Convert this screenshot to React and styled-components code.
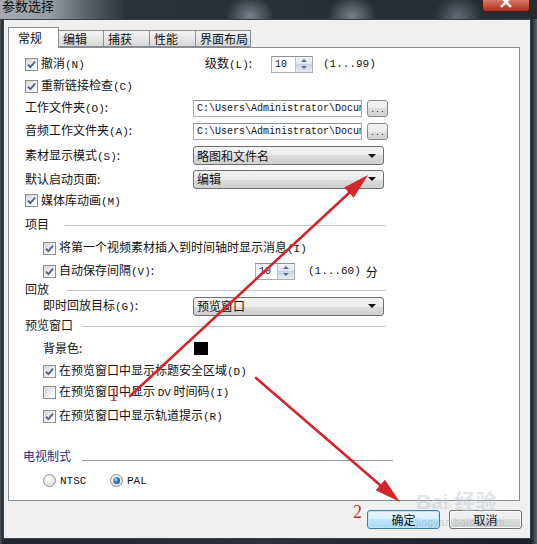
import styled, { createGlobalStyle } from 'styled-components';

const Global = createGlobalStyle`
  html, body { margin: 0; padding: 0; background: #1f2429; overflow: hidden; }
  body {
    font-family: "Noto Sans CJK SC", "Noto Sans", sans-serif;
    font-size: 12px;
    color: #111;
  }
`;

const Frame = styled.div`
  position: relative;
  width: 537px;
  height: 544px;
  display: flex;
  flex-direction: column;
  overflow: hidden;
  background: linear-gradient(90deg, #4a5158 0, #22272d 3px, #2a3036 50%, #1b1f25 calc(100% - 6px), #5d646c 100%);
`;

const TitleBar = styled.div`
  height: 19px;
  flex: 0 0 19px;
  display: flex;
  justify-content: space-between;
  align-items: flex-start;
  background:
    radial-gradient(ellipse 24px 20px at 250px 16px, rgba(185,195,205,.55), transparent),
    radial-gradient(ellipse 24px 20px at 352px 16px, rgba(185,195,205,.55), transparent),
    radial-gradient(ellipse 24px 20px at 458px 16px, rgba(170,180,190,.45), transparent),
    linear-gradient(90deg, #a5aaaf 0, #979da3 50px, #5e646b 85px, #2d3238 125px, #272c32 100%);
`;

const Title = styled.div`
  font-size: 13px;
  line-height: 13px;
  padding-left: 2px;
  margin-top: -1px;
  color: #0d0d0d;
`;

const Close = styled.div`
  width: 46px;
  height: 11px;
  margin-right: 7px;
  border: 1px solid #5a1a14;
  border-top: none;
  border-radius: 0 0 4px 4px;
  background: linear-gradient(#d87a6a, #c24a36 60%, #a8301f);
  display: flex;
  justify-content: center;
  overflow: hidden;
  svg { margin-top: -4px; }
`;

const Client = styled.div`
  flex: 1;
  margin: 0 6px 5px 3px;
  border: 1px solid #3b4148;
  background: #f0f0f0;
  padding: 7px 10px 0 4px;
  display: flex;
  flex-direction: column;
`;

const TabStrip = styled.div`
  display: flex;
  align-items: flex-end;
  height: 21px;
  position: relative;
  z-index: 1;
`;

const Tab = styled.div`
  box-sizing: border-box;
  width: ${p => p.w}px;
  height: ${p => (p.active ? 21 : 17)}px;
  margin-bottom: ${p => (p.active ? 0 : 1)}px;
  margin-left: ${p => (p.first ? 0 : -1)}px;
  padding-left: ${p => (p.active ? 9 : 4)}px;
  border: 1px solid #898c95;
  border-bottom: ${p => (p.active ? 'none' : '1px solid #898c95')};
  background: ${p => (p.active ? '#fff' : 'linear-gradient(#f4f4f4, #e6e6e6 50%, #d8d8d8)')};
  line-height: ${p => (p.active ? 19 : 15)}px;
  font-size: 12px;
`;

const Panel = styled.div`
  box-sizing: border-box;
  margin-top: -1px;
  width: 512px;
  height: 454px;
  border: 1px solid #898c95;
  background: #fff;
  padding-top: 5px;
  display: flex;
  flex-direction: column;
`;

const Row = styled.div`
  height: ${p => p.h}px;
  flex: 0 0 ${p => p.h}px;
  margin-top: ${p => p.mt || 0}px;
  padding-left: ${p => p.indent}px;
  display: flex;
  align-items: center;
  white-space: nowrap;
`;

const Label = styled.span`
  width: ${p => p.w}px;
  flex: 0 0 ${p => p.w}px;
  line-height: 14px;
`;

const Mn = styled.span`
  font-family: "Liberation Mono", monospace;
  font-size: 11px;
`;

const CheckWrap = styled.span`
  display: flex;
  align-items: center;
  width: ${p => (p.w ? `${p.w}px` : 'auto')};
  flex: 0 0 auto;
  line-height: 14px;
  white-space: pre;
`;

const Box = styled.span`
  box-sizing: border-box;
  width: 13px;
  height: 13px;
  margin-right: 3px;
  border: 1px solid #8e8f8f;
  background: linear-gradient(135deg, #d6d6d6, #f6f6f6 70%, #fff);
  display: flex;
  align-items: center;
  justify-content: center;
`;

const Check = ({ on, w, children }) => (
  <CheckWrap w={w}>
    <Box>
      {on && (
        <svg width="11" height="11" viewBox="0 0 11 11">
          <path d="M2 5.6 L4.4 8.2 L9 2.6" fill="none" stroke="#4b5f86" strokeWidth="1.8" />
        </svg>
      )}
    </Box>
    <span>{children}</span>
  </CheckWrap>
);

const RadioDot = styled.span`
  box-sizing: border-box;
  width: 13px;
  height: 13px;
  border-radius: 50%;
  margin-right: 4px;
  border: 1px solid #8e8f8f;
  background: radial-gradient(circle at 40% 35%, #fff, #d4d4d4);
  display: flex;
  align-items: center;
  justify-content: center;
  &::after {
    content: '';
    display: ${p => (p.on ? 'block' : 'none')};
    width: 7px;
    height: 7px;
    border-radius: 50%;
    background: radial-gradient(circle at 35% 35%, #9fd0f5, #2a6bb0 55%, #0e3a6e);
  }
`;

const Radio = ({ on, w, children }) => (
  <CheckWrap w={w}>
    <RadioDot on={on} />
    <span>{children}</span>
  </CheckWrap>
);

const Field = styled.span`
  box-sizing: border-box;
  width: ${p => p.w}px;
  height: 17px;
  border: 1px solid #abadb3;
  border-top-color: #8d9097;
  background: #fff;
  display: flex;
  align-items: center;
  overflow: hidden;
  font-family: "Liberation Mono", monospace;
  font-size: 10px;
  padding-left: 3px;
`;

const SpinBtns = styled.span`
  margin-left: auto;
  width: 16px;
  height: 15px;
  border-left: 1px solid #b4c0d3;
  background: linear-gradient(#f4f7fb, #dfe6f0 48%, #c9d4e3 50%, #e6ecf4);
  display: flex;
  flex-direction: column;
  align-items: center;
  justify-content: space-around;
  &::before, &::after {
    content: '';
    border-left: 3px solid transparent;
    border-right: 3px solid transparent;
  }
  &::before { border-bottom: 3px solid #5a6b8c; }
  &::after { border-top: 3px solid #5a6b8c; }
`;

const Spin = ({ w, value }) => (
  <Field w={w}>
    <span>{value}</span>
    <SpinBtns />
  </Field>
);

const Hint = styled.span`
  margin-left: ${p => p.ml}px;
  font-family: "Liberation Mono", "Noto Sans CJK SC", monospace;
  font-size: 11px;
`;

const HintCjk = styled.span`
  font-family: "Noto Sans CJK SC", sans-serif;
  font-size: 12px;
  margin-left: 5px;
`;

const Dots = styled.span`
  box-sizing: border-box;
  width: 21px;
  height: 17px;
  margin-left: 5px;
  border: 1px solid #8a8a8a;
  border-radius: 3px;
  background: linear-gradient(#f4f4f4, #ececec 50%, #dedede 50%, #d2d2d2);
  display: flex;
  justify-content: center;
  align-items: center;
  font-family: "Liberation Mono", monospace;
  font-size: 8px;
  line-height: 9px;
  padding-top: 2px;
  overflow: hidden;
`;

const Select = styled.span`
  box-sizing: border-box;
  width: 191px;
  height: 19px;
  border: 1px solid #707070;
  border-radius: 3px;
  background: linear-gradient(#f3f3f3, #ebebeb 50%, #dddddd 50%, #cfcfcf);
  display: flex;
  align-items: center;
  padding: 0 7px 0 3px;
  line-height: 14px;
  &::after {
    content: '';
    margin-left: auto;
    border-left: 4px solid transparent;
    border-right: 4px solid transparent;
    border-top: 4px solid #111;
  }
`;

const Swatch = styled.span`
  width: 14px;
  height: 13px;
  background: #000;
`;

const Section = styled.div`
  height: ${p => p.h}px;
  flex: 0 0 ${p => p.h}px;
  margin-top: ${p => p.mt || 0}px;
  padding-left: ${p => p.indent}px;
  width: ${p => p.end - p.indent}px;
  display: flex;
  align-items: center;
  color: ${p => (p.tv ? '#1b2f82' : '#1a1a1a')};
  line-height: 14px;
  &::after {
    content: '';
    flex: 1;
    margin-left: ${p => p.gap}px;
    margin-top: ${p => (p.tv ? 8 : 2)}px;
    height: 1px;
    background: ${p => (p.tv ? '#9a9a9a' : '#c4c4c4')};
  }
`;

const ButtonBar = styled.div`
  display: flex;
  justify-content: flex-end;
  gap: 9px;
  margin: 9px -2px 0 0;
`;

const Button = styled.div`
  box-sizing: border-box;
  width: 73px;
  height: 19px;
  border-radius: 3px;
  border: 1px solid ${p => (p.primary ? '#3c7fb1' : '#707070')};
  background: ${p => (p.primary
    ? 'linear-gradient(#eaf6fd, #d9f0fc 50%, #bee6fd 50%, #a7d9f5)'
    : 'linear-gradient(#f3f3f3, #ebebeb 50%, #dddddd 50%, #cfcfcf)')};
  box-shadow: ${p => (p.primary ? 'inset 0 0 0 1px #bfe3f8' : 'inset 0 0 0 1px #fafafa')};
  display: flex;
  align-items: center;
  justify-content: center;
  line-height: 14px;
`;

const Overlay = styled.svg`
  position: absolute;
  left: 0;
  top: 0;
  z-index: 10;
  pointer-events: none;
`;

const Marker = styled.span`
  position: absolute;
  left: ${p => p.x}px;
  top: ${p => p.y}px;
  z-index: 11;
  font-family: "Liberation Serif", serif;
  font-size: 18px;
  line-height: 18px;
  color: #c2332b;
`;

const Watermark = styled.div`
  position: absolute;
  left: 416px;
  top: 491px;
  z-index: 9;
  color: rgba(196, 202, 210, 0.5);
  font-family: "Liberation Sans", "Noto Sans CJK SC", sans-serif;
  display: flex;
  flex-direction: column;
  line-height: 1;
  pointer-events: none;
  b { font-size: 21px; font-weight: bold; }
  i { font-style: normal; font-size: 10px; margin-top: 6px; letter-spacing: 0.5px; color: rgba(150, 160, 172, 0.45); }
`;

const App = () => (
  <Frame>
    <Global />
    <TitleBar>
      <Title>参数选择</Title>
      <Close>
        <svg width="14" height="12" viewBox="0 0 14 12">
          <path d="M2 1 L12 11 M12 1 L2 11" stroke="#fff" strokeWidth="2.4" />
        </svg>
      </Close>
    </TitleBar>
    <Client>
      <TabStrip>
        <Tab w={51} active first>常规</Tab>
        <Tab w={46}>编辑</Tab>
        <Tab w={47}>捕获</Tab>
        <Tab w={47}>性能</Tab>
        <Tab w={56}>界面布局</Tab>
      </TabStrip>
      <Panel>
        <Row h={22} indent={16}>
          <Check on w={180}>撤消<Mn>(N)</Mn></Check>
          <Label w={66}>级数<Mn>(L)</Mn>:</Label>
          <Spin w={42} value="10" />
          <Hint ml={10}>(1...99)</Hint>
        </Row>
        <Row h={22} indent={16}>
          <Check on>重新链接检查<Mn>(C)</Mn></Check>
        </Row>
        <Row h={22} indent={16}>
          <Label w={168}>工作文件夹<Mn>(O)</Mn>:</Label>
          <Field w={169}>C:\Users\Administrator\Documents</Field>
          <Dots>...</Dots>
        </Row>
        <Row h={24} indent={16}>
          <Label w={168}>音频工作文件夹<Mn>(A)</Mn>:</Label>
          <Field w={169}>C:\Users\Administrator\Documents</Field>
          <Dots>...</Dots>
        </Row>
        <Row h={25} indent={16}>
          <Label w={168}>素材显示模式<Mn>(S)</Mn>:</Label>
          <Select>略图和文件名</Select>
        </Row>
        <Row h={22} indent={16}>
          <Label w={168}>默认启动页面:</Label>
          <Select>编辑</Select>
        </Row>
        <Row h={21} indent={16}>
          <Check on>媒体库动画<Mn>(M)</Mn></Check>
        </Row>
        <Section h={26} indent={16} end={377} gap={16}>项目</Section>
        <Row h={22} indent={34}>
          <Check on>将第一个视频素材插入到时间轴时显示消息<Mn>(I)</Mn></Check>
        </Row>
        <Row h={24} indent={34}>
          <Check on w={212}>自动保存间隔<Mn>(V)</Mn>:</Check>
          <Spin w={40} value="10" />
          <Hint ml={13}>(1...60)</Hint>
          <HintCjk>分</HintCjk>
        </Row>
        <Section h={12} indent={16} end={377} gap={18}>回放</Section>
        <Row h={22} indent={34}>
          <Label w={150}>即时回放目标<Mn>(G)</Mn>:</Label>
          <Select>预览窗口</Select>
        </Row>
        <Section h={16} indent={16} end={377} gap={9}>预览窗口</Section>
        <Row h={30} indent={34}>
          <Label w={151}>背景色:</Label>
          <Swatch />
        </Row>
        <Row h={16} indent={34}>
          <Check on>在预览窗口中显示标题安全区域<Mn>(D)</Mn></Check>
        </Row>
        <Row h={26} indent={34}>
          <Check>在预览窗口中显示 <Mn>DV</Mn> 时间码<Mn>(I)</Mn></Check>
        </Row>
        <Row h={22} indent={34}>
          <Check on>在预览窗口中显示轨道提示<Mn>(R)</Mn></Check>
        </Row>
        <Section h={22} mt={18} indent={14} end={384} gap={11} tv>电视制式</Section>
        <Row h={26} indent={34}>
          <Radio w={67}><Mn>NTSC</Mn></Radio>
          <Radio on><Mn>PAL</Mn></Radio>
        </Row>
      </Panel>
      <ButtonBar>
        <Button primary>确定</Button>
        <Button>取消</Button>
      </ButtonBar>
    </Client>

    <Watermark>
      <b>Bai 经验</b>
      <i>jingyan.baidu.com</i>
    </Watermark>

    <Overlay width="537" height="544" viewBox="0 0 537 544">
      <g stroke="#d2262b" strokeWidth="2.6" strokeLinecap="round">
        <line x1="130" y1="396" x2="349" y2="193" />
        <line x1="256" y1="378" x2="380" y2="485" />
      </g>
      <g fill="#d2262b">
        <polygon points="368,175 353.7,197.8 344.1,187.6" />
        <polygon points="400,502 375.7,490.3 384.9,479.7" />
      </g>
    </Overlay>
    <Marker x={109} y={386}>1</Marker>
    <Marker x={353} y={503}>2</Marker>
  </Frame>
);

export default App;
